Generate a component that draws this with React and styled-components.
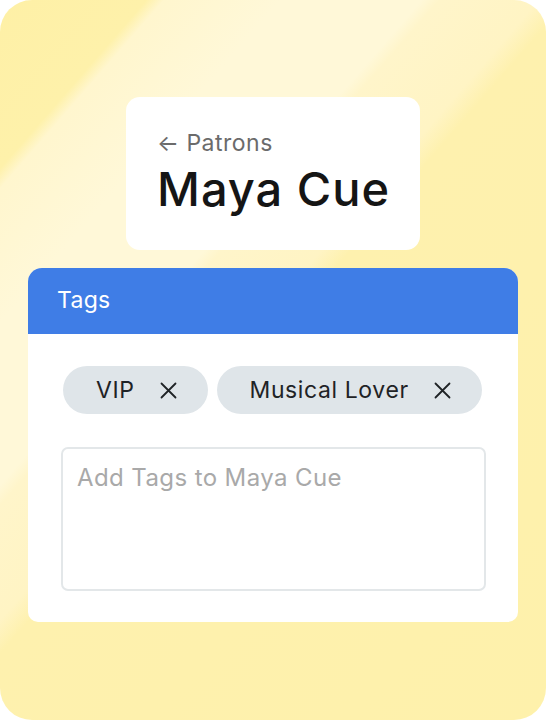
import styled, { createGlobalStyle } from "styled-components";

const GlobalStyle = createGlobalStyle`
  html, body {
    margin: 0;
    padding: 0;
    background: #ffffff;
  }
  body {
    font-family: Inter, "Liberation Sans", sans-serif;
  }
  * {
    box-sizing: border-box;
  }
`;

const tags = ["VIP", "Musical Lover"];

export default function App() {
  return (
    <>
      <GlobalStyle />
      <Card>
        <Heading>
          <BackLink>← Patrons</BackLink>
          <Name>Maya Cue</Name>
        </Heading>
        <Panel>
          <PanelHeader>Tags</PanelHeader>
          <PanelBody>
            <ChipRow>
              {tags.map((tag) => (
                <Chip key={tag}>
                  <span>{tag}</span>
                  <CloseIcon />
                </Chip>
              ))}
            </ChipRow>
            <TagInput placeholder="Add Tags to Maya Cue" />
          </PanelBody>
        </Panel>
      </Card>
    </>
  );
}

function CloseIcon() {
  return (
    <svg width="17" height="17" viewBox="0 0 17 17" fill="none">
      <path
        d="M1.5 1.5 L15.5 15.5 M15.5 1.5 L1.5 15.5"
        stroke="#1f2326"
        strokeWidth="1.8"
        strokeLinecap="round"
      />
    </svg>
  );
}

const Card = styled.div`
  width: 546px;
  height: 720px;
  border-radius: 32px;
  overflow: hidden;
  display: flex;
  flex-direction: column;
  align-items: center;
  padding: 97px 28px 0;
  background: linear-gradient(
    131deg,
    #fef0a6 0%,
    #fef1aa 12.5%,
    #fff6ce 14%,
    #fff8d8 24%,
    #fff8d8 36%,
    #fff5ca 37.5%,
    #fff4c4 46%,
    #fef1ae 48.5%,
    #fef1ab 100%
  );
`;

const Heading = styled.div`
  width: 294px;
  height: 153px;
  background: #ffffff;
  border-radius: 14px;
  padding: 30px 0 0 31px;
  display: flex;
  flex-direction: column;
`;

const BackLink = styled.div`
  font-size: 23px;
  letter-spacing: 0.5px;
  color: #6b6b6b;
  line-height: 32px;
`;

const Name = styled.div`
  font-size: 47px;
  font-weight: 500;
  letter-spacing: 1px;
  color: #151515;
  line-height: 56px;
  margin-top: 2px;
`;

const Panel = styled.div`
  width: 100%;
  margin-top: 18px;
  border-radius: 14px 14px 10px 10px;
  overflow: hidden;
  background: #ffffff;
`;

const PanelHeader = styled.div`
  height: 66px;
  background: #3f7de6;
  color: #ffffff;
  font-size: 23px;
  letter-spacing: 0.3px;
  display: flex;
  align-items: center;
  padding-left: 29px;
  padding-bottom: 2px;
`;

const PanelBody = styled.div`
  padding: 32px 32px 31px 33px;
  display: flex;
  flex-direction: column;
  gap: 33px;
`;

const ChipRow = styled.div`
  display: flex;
  gap: 9px;
  padding-left: 2px;
`;

const Chip = styled.div`
  height: 48px;
  border-radius: 24px;
  background: #dfe5e9;
  display: flex;
  align-items: center;
  gap: 25px;
  padding: 0 31px 0 33px;
  font-size: 23px;
  letter-spacing: 0.6px;
  color: #1f2326;
`;

const TagInput = styled.textarea`
  height: 144px;
  width: 100%;
  resize: none;
  border: 2px solid #e3e7e9;
  border-radius: 7px;
  padding: 14px 14px;
  font-family: Inter, "Liberation Sans", sans-serif;
  font-size: 24px;
  letter-spacing: 0.4px;
  color: #333;
  outline: none;
  &::placeholder {
    color: #a9a9a9;
  }
`;
